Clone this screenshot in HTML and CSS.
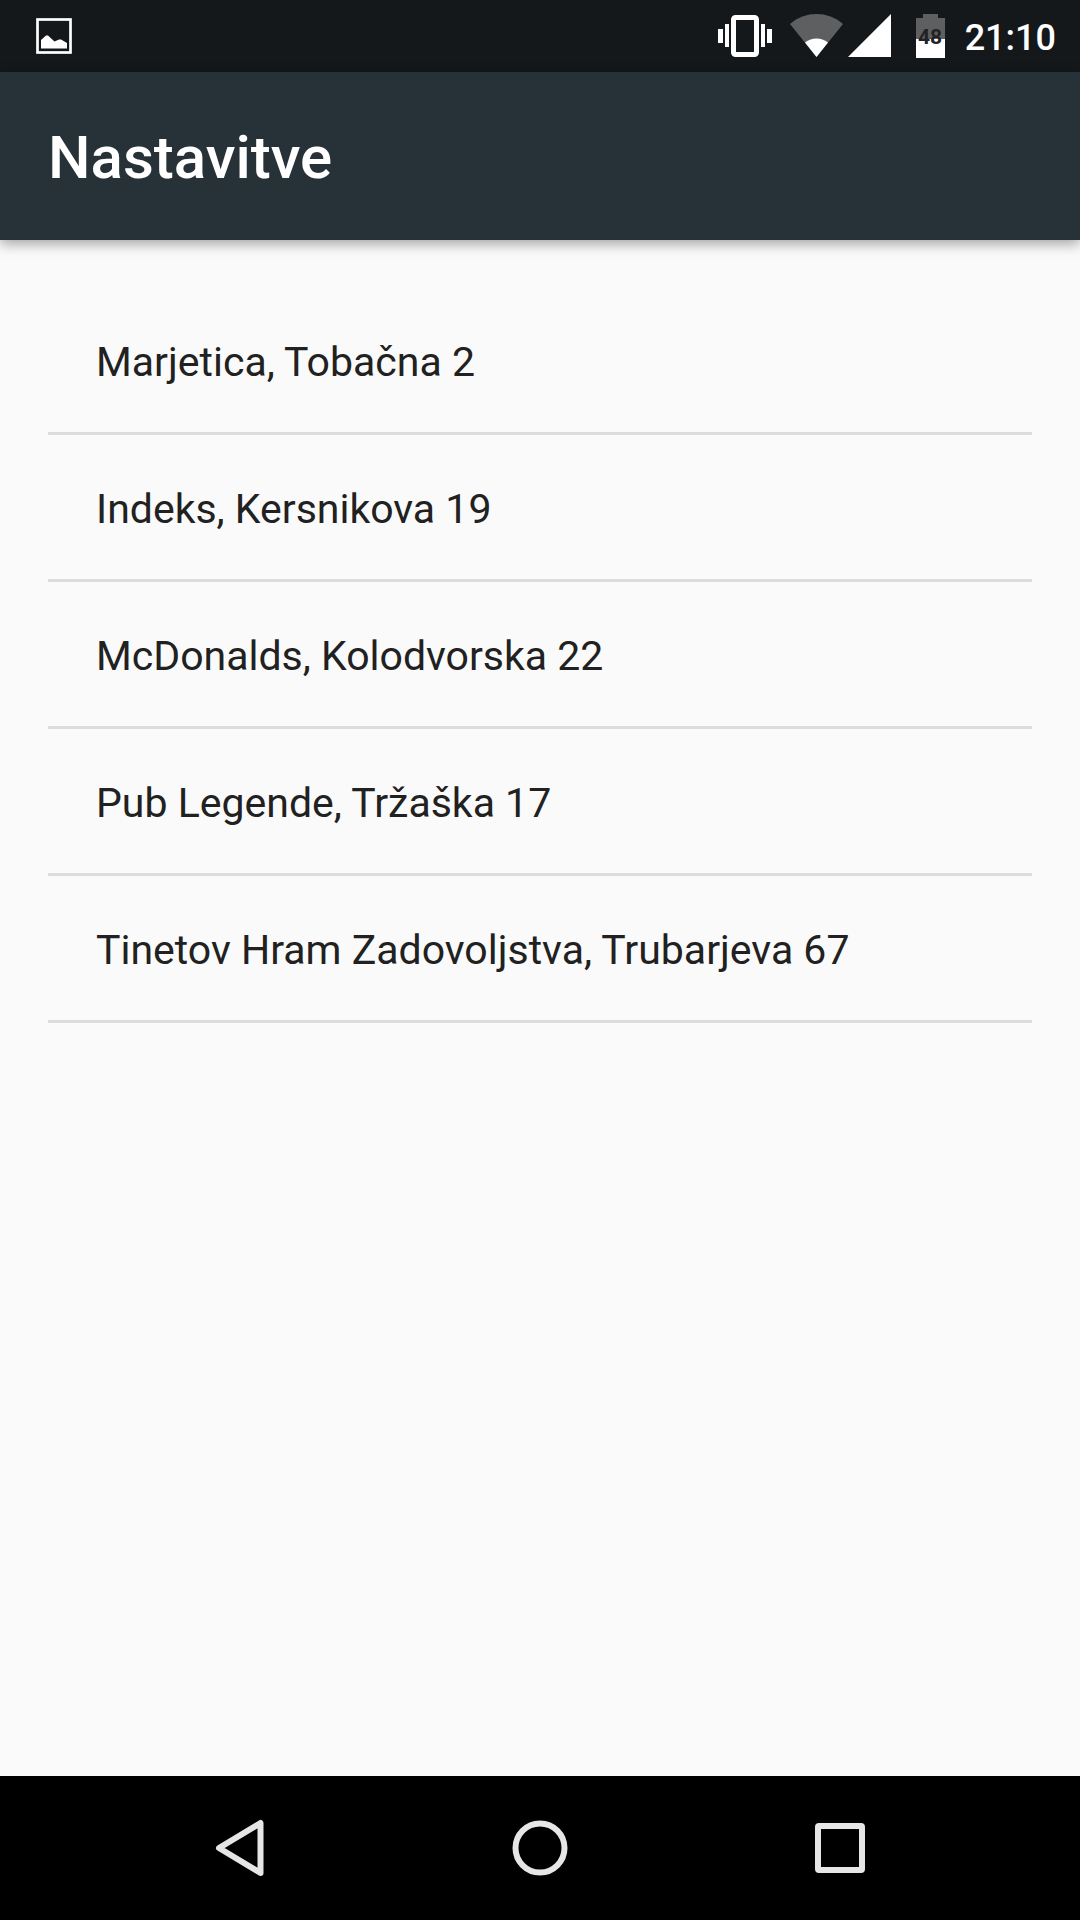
FILE: index.html
```html
<!DOCTYPE html>
<html lang="sl">
<head>
<meta charset="utf-8">
<meta name="viewport" content="width=device-width, initial-scale=1">
<title>Nastavitve</title>
<link rel="stylesheet" href="styles.css">
</head>
<body>
<div class="screen">
  <div class="status-bar">
    <svg class="icon-picture" width="36" height="36" viewBox="0 0 36 36" aria-hidden="true">
      <rect x="1.5" y="1.5" width="33" height="33" fill="none" stroke="#fff" stroke-width="2.700"/>
      <path d="M5 30.500V22L10 17.500H12L18.500 23.500L23 21.500H25L31 25V30.500Z" fill="#fff"/>
    </svg>
    <div class="status-icons">
      <svg width="54" height="44" viewBox="0 0 54 44" aria-hidden="true">
        <path fill="#fff" d="M0 15h5v14H0zM7 10h4v23H7zM43 10h4v23h-4zM49 15h5v14h-5z"/>
        <rect x="15.500" y="3.500" width="23" height="37" rx="2" fill="none" stroke="#fff" stroke-width="5"/>
      </svg>
      <svg class="icon-wifi" width="54" height="44" viewBox="0 0 54 44" aria-hidden="true">
        <path fill="#5e5f60" d="M0 10C15-3.300 38-3.300 53 10L26.500 43Z"/>
        <path fill="#fff" d="M15 28.500C22 23.200 31 23.200 38 28.500L26.500 43Z"/>
      </svg>
      <svg class="icon-signal" width="43" height="44" viewBox="0 0 43 44" aria-hidden="true">
        <path fill="#fff" d="M0 43L43 0V43Z"/>
      </svg>
      <svg class="icon-battery" width="29" height="44" viewBox="0 0 29 44" aria-hidden="true">
        <path fill="#5e5f60" d="M7 0H22V4H29V25H0V4H7Z"/>
        <path fill="#fff" d="M0 25H29V44H0Z"/>
        <text class="battery-level" x="14" y="30" text-anchor="middle">48</text>
      </svg>
      <time class="clock">21:10</time>
    </div>
  </div>
  <header class="app-bar">
    <h1 class="title">Nastavitve</h1>
  </header>
  <main class="content">
    <ul class="places">
      <li class="place">Marjetica, Tobačna 2</li>
      <li class="place">Indeks, Kersnikova 19</li>
      <li class="place">McDonalds, Kolodvorska 22</li>
      <li class="place">Pub Legende, Tržaška 17</li>
      <li class="place">Tinetov Hram Zadovoljstva, Trubarjeva 67</li>
    </ul>
  </main>
  <nav class="nav-bar">
    <button class="nav-button" type="button" aria-label="Nazaj">
      <svg width="60" height="60" viewBox="0 0 60 60" aria-hidden="true">
        <path d="M9 30L50.500 5V55Z" fill="none" stroke="#e6e6e6" stroke-width="6" stroke-linejoin="round"/>
      </svg>
    </button>
    <button class="nav-button" type="button" aria-label="Domov">
      <svg width="60" height="60" viewBox="0 0 60 60" aria-hidden="true">
        <circle cx="30" cy="30" r="24.500" fill="none" stroke="#e6e6e6" stroke-width="6"/>
      </svg>
    </button>
    <button class="nav-button" type="button" aria-label="Pregled">
      <svg width="60" height="60" viewBox="0 0 60 60" aria-hidden="true">
        <path fill="#e6e6e6" fill-rule="evenodd" d="M9 5H51Q55 5 55 9V51Q55 55 51 55H9Q5 55 5 51V9Q5 5 9 5ZM11 11V49H49V11Z"/>
      </svg>
    </button>
  </nav>
</div>
</body>
</html>
```
FILE: styles.css
```css
* {
  box-sizing: border-box;
}

body {
  margin: 0;
  background: #fafafa;
  color: #212121;
  font-family: Roboto, "Liberation Sans", sans-serif;
}

svg {
  display: block;
  flex: none;
}

.screen {
  display: flex;
  flex-direction: column;
  min-height: 100vh;
}

.status-bar {
  display: flex;
  align-items: center;
  justify-content: space-between;
  height: 72px;
  padding: 0 24px 0 36px;
  background: #14181b;
}

.status-icons {
  display: flex;
  align-items: center;
}

.icon-wifi {
  margin-left: 18px;
}

.icon-signal {
  margin-left: 4px;
}

.icon-battery {
  margin-left: 25px;
}

.battery-level {
  font-size: 21px;
  font-weight: 700;
  fill: #202224;
}

.clock {
  margin-left: 20px;
  padding-top: 4px;
  color: #fff;
  font-size: 36px;
  font-weight: 500;
  line-height: 48px;
}

.app-bar {
  display: flex;
  align-items: center;
  height: 168px;
  padding: 4px 48px 0;
  background: #273238;
  box-shadow: 0 4px 12px rgba(0, 0, 0, 0.35);
}

.title {
  margin: 0;
  color: #fff;
  font-size: 60px;
  font-weight: 500;
  line-height: 72px;
}

.content {
  flex: 1;
  padding: 48px;
}

.places {
  margin: 0;
  padding: 0;
  list-style: none;
}

.place {
  padding: 50px 48px 46px;
  border-bottom: 3px solid #dcdcdc;
  font-size: 41px;
  line-height: 48px;
}

.nav-bar {
  display: flex;
  height: 144px;
  padding: 0 90px;
  background: #000;
}

.nav-button {
  display: flex;
  flex: 1;
  align-items: center;
  justify-content: center;
  padding: 0;
  border: 0;
  background: none;
}
```
